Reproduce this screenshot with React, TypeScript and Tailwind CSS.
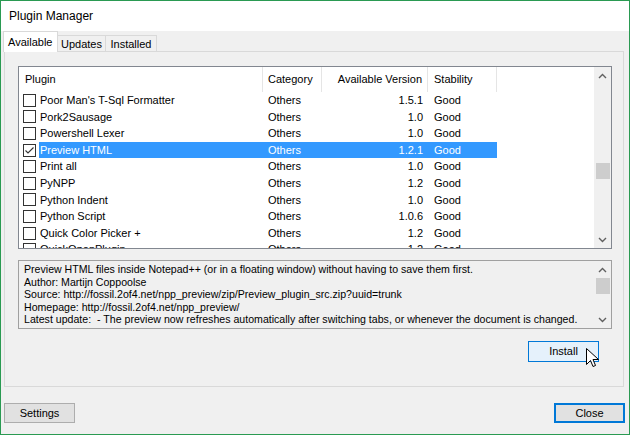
import React from "react";

const rows: { name: string; ver: string; checked?: boolean; sel?: boolean }[] = [
  { name: "Poor Man's T-Sql Formatter", ver: "1.5.1" },
  { name: "Pork2Sausage", ver: "1.0" },
  { name: "Powershell Lexer", ver: "1.0" },
  { name: "Preview HTML", ver: "1.2.1", checked: true, sel: true },
  { name: "Print all", ver: "1.0" },
  { name: "PyNPP", ver: "1.2" },
  { name: "Python Indent", ver: "1.0" },
  { name: "Python Script", ver: "1.0.6" },
  { name: "Quick Color Picker +", ver: "1.2" },
  { name: "QuickOpenPlugin", ver: "1.2" },
];

function Chevron({ up }: { up?: boolean }) {
  return (
    <svg width="9" height="6" viewBox="0 0 9 6" className="block">
      {up ? (
        <path d="M1 5 L4.5 1.5 L8 5" fill="none" stroke="#606060" strokeWidth="1.4" />
      ) : (
        <path d="M1 1 L4.5 4.5 L8 1" fill="none" stroke="#606060" strokeWidth="1.4" />
      )}
    </svg>
  );
}

function Checkbox({ checked }: { checked?: boolean }) {
  return (
    <div className="w-[13px] h-[13px] border border-[#333333] bg-white flex items-center justify-center">
      {checked && (
        <svg width="11" height="11" viewBox="0 0 11 11">
          <path d="M1.5 5.5 L4 8 L9.5 2.5" fill="none" stroke="#333333" strokeWidth="1.1" />
        </svg>
      )}
    </div>
  );
}

function Cursor() {
  return (
    <svg width="14" height="21" viewBox="0 0 14 21" className="absolute left-[58px] top-[7px]">
      <path
        d="M0.5 0.5 L0.5 16.5 L4.5 12.5 L7 18.5 L9.5 17.5 L7 11.5 L12.5 11.5 Z"
        fill="#ffffff"
        stroke="#000000"
        strokeWidth="1"
        strokeLinejoin="miter"
      />
    </svg>
  );
}

export default function App() {
  const font = { fontFamily: '"Liberation Sans", Arial, sans-serif' };
  return (
    <div
      className="w-[630px] h-[435px] border border-[#2a9a52] bg-[#f0f0f0] flex flex-col text-black box-border overflow-hidden"
      style={font}
    >
      {/* Title bar */}
      <div className="h-[30px] bg-white flex items-center pl-[8px] text-[12px] shrink-0">Plugin Manager</div>

      {/* Tabs */}
      <div className="h-[21px] flex items-end pl-[2px] shrink-0 relative z-10">
        <div className="h-[21px] w-[55px] bg-white border border-b-0 border-[#d9d9d9] flex items-center pl-[4px] text-[11px] pt-[1px]">
          Available
        </div>
        <div className="h-[17px] w-[48px] border border-l-0 border-b-0 border-[#d9d9d9] flex items-center justify-center text-[11px] pt-[1px]">
          Updates
        </div>
        <div className="h-[17px] w-[51px] border border-l-0 border-b-0 border-[#d9d9d9] flex items-center justify-center text-[11px] pt-[1px]">
          Installed
        </div>
      </div>

      {/* Panel */}
      <div className="ml-[3px] mr-[5px] h-[336px] border border-[#d9d9d9] -mt-[1px] flex flex-col pl-[13px] pr-[11px] pt-[14px] shrink-0">
        {/* List view */}
        <div className="h-[183px] border border-[#828790] bg-white flex shrink-0 text-[11px]">
          <div className="flex-1 flex flex-col overflow-hidden">
            {/* header */}
            <div className="h-[25px] flex shrink-0">
              <div className="w-[244px] pl-[6px] flex items-center border-r border-[#e5e5e5]">Plugin</div>
              <div className="w-[59px] pl-[5px] flex items-center border-r border-[#e5e5e5] overflow-hidden whitespace-nowrap">
                Category
              </div>
              <div className="w-[106px] pr-[5px] flex items-center justify-end border-r border-[#e5e5e5]">
                Available Version
              </div>
              <div className="w-[69px] pl-[6px] flex items-center border-r border-[#e5e5e5]">Stability</div>
            </div>
            {rows.map((r) => (
              <div key={r.name} className="h-[16.6px] flex shrink-0 items-center">
                <div className="w-[20px] pl-[4px] flex items-center shrink-0">
                  <Checkbox checked={r.checked} />
                </div>
                <div
                  className={`flex h-full items-center ${r.sel ? "bg-[#3399ff] text-white" : ""}`}
                >
                  <div className="w-[224px] pl-[1px] whitespace-nowrap">{r.name}</div>
                  <div className="w-[59px] pl-[5px]">Others</div>
                  <div className="w-[106px] pr-[5px] text-right">{r.ver}</div>
                  <div className="w-[69px] pl-[6px]">Good</div>
                </div>
              </div>
            ))}
          </div>
          {/* scrollbar */}
          <div className="w-[17px] bg-[#f0f0f0] flex flex-col items-center shrink-0">
            <div className="h-[17px] flex items-center justify-center">
              <Chevron up />
            </div>
            <div className="h-[79px]" />
            <div className="w-[14px] h-[16px] bg-[#cdcdcd]" />
            <div className="flex-1" />
            <div className="h-[17px] flex items-center justify-center">
              <Chevron />
            </div>
          </div>
        </div>

        {/* Description */}
        <div className="mt-[11px] h-[69px] border border-[#a0a0a0] bg-[#f0f0f0] flex shrink-0">
          <div className="flex-1 pl-[5px] pt-[2px] text-[10.6px] leading-[12.6px] whitespace-nowrap overflow-hidden">
            <div>Preview HTML files inside Notepad++ (or in a floating window) without having to save them first.</div>
            <div>Author: Martijn Coppoolse</div>
            <div>Source: http://fossil.2of4.net/npp_preview/zip/Preview_plugin_src.zip?uuid=trunk</div>
            <div>Homepage: http://fossil.2of4.net/npp_preview/</div>
            <div>
              Latest update:&nbsp; - The preview now refreshes automatically after switching tabs, or whenever the
              document is changed.
            </div>
          </div>
          <div className="w-[17px] flex flex-col items-center shrink-0">
            <div className="h-[17px] flex items-center justify-center">
              <Chevron up />
            </div>
            <div className="w-[14px] h-[16px] bg-[#cdcdcd]" />
            <div className="flex-1" />
            <div className="h-[17px] flex items-center justify-center">
              <Chevron />
            </div>
          </div>
        </div>

        {/* Install */}
        <div className="mt-[12px] flex justify-end pr-[13px]">
          <div className="relative">
            <div className="w-[71px] h-[21px] bg-[#e5f1fb] border border-[#0078d7] flex items-center justify-center text-[11px]">
              Install
            </div>
            <Cursor />
          </div>
        </div>
      </div>

      {/* Bottom buttons */}
      <div className="mt-[16px] flex justify-between pl-[3px] pr-[4px]">
        <div className="w-[71px] h-[20px] bg-[#e1e1e1] border border-[#adadad] flex items-center justify-center text-[11px]">
          Settings
        </div>
        <div className="w-[71px] h-[20px] bg-[#e1e1e1] border-2 border-[#0078d7] flex items-center justify-center text-[11px]">
          Close
        </div>
      </div>
    </div>
  );
}
